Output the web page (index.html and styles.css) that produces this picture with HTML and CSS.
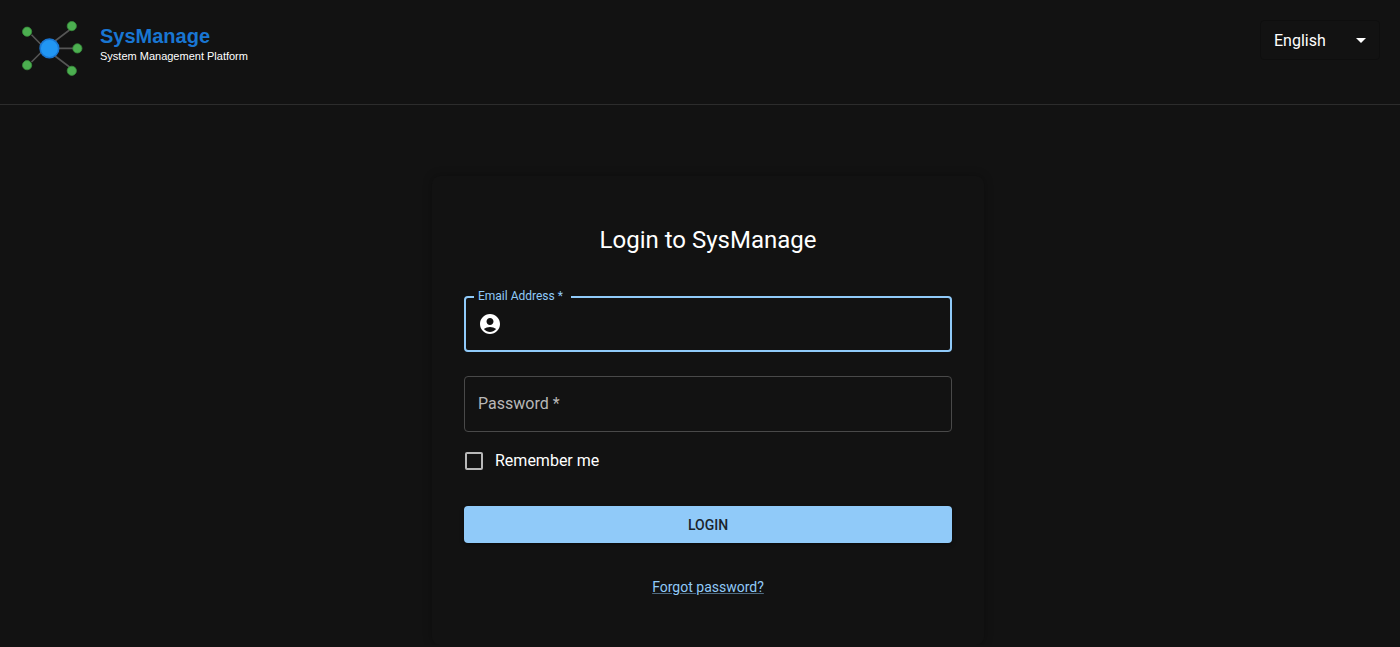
FILE: index.html
```html
<!DOCTYPE html>
<html lang="en">
<head>
  <meta charset="utf-8">
  <meta name="viewport" content="width=device-width, initial-scale=1">
  <title>SysManage</title>
  <link rel="stylesheet" href="styles.css">
</head>
<body>
  <header class="header">
    <div class="brand">
      <svg class="brand-logo" viewBox="0 0 64 64" aria-hidden="true">
        <path d="M11.500 18.800 21.500 29M35 25 49.500 14M39 32.400H53M35 40 49.500 51M11.500 46 21.500 36" fill="none" stroke="#555" stroke-width="1.6"/>
        <circle cx="29.400" cy="32.400" r="9.300" fill="#2196f3" stroke="#1976d2" stroke-width="1.6"/>
        <g fill="#4caf50" stroke="#388e3c" stroke-width=".8">
          <circle cx="7.100" cy="15.700" r="4.600"/>
          <circle cx="51.800" cy="10.100" r="4.600"/>
          <circle cx="57.400" cy="32.400" r="4.600"/>
          <circle cx="51.800" cy="54.800" r="4.600"/>
          <circle cx="7.100" cy="49.200" r="4.600"/>
        </g>
      </svg>
      <div class="brand-text">
        <span class="brand-name">SysManage</span>
        <span class="brand-tagline">System Management Platform</span>
      </div>
    </div>
    <div class="language">
      <select class="language-select" aria-label="Language">
        <option>English</option>
      </select>
      <svg class="language-arrow" viewBox="0 0 24 24" aria-hidden="true"><path d="m7 10 5 5 5-5z"/></svg>
    </div>
  </header>
  <main class="main">
    <form class="card">
      <h1 class="title">Login to SysManage</h1>
      <div class="field field-active">
        <label class="field-label" for="email">Email Address *</label>
        <svg class="field-icon" viewBox="0 0 24 24" aria-hidden="true"><path d="M12 2C6.480 2 2 6.480 2 12s4.480 10 10 10 10-4.480 10-10S17.520 2 12 2m0 4c1.930 0 3.500 1.570 3.500 3.500S13.930 13 12 13s-3.500-1.570-3.500-3.500S10.070 6 12 6m0 14c-2.030 0-4.430-.82-6.140-2.880C7.550 15.800 9.680 15 12 15s4.450.8 6.140 2.120C16.430 19.180 14.030 20 12 20"/></svg>
        <input class="field-input" id="email" type="email" required>
      </div>
      <div class="field">
        <label class="field-label" for="password">Password *</label>
        <input class="field-input" id="password" type="password" required>
      </div>
      <label class="remember">
        <input class="remember-box" type="checkbox">
        <span>Remember me</span>
      </label>
      <button class="submit" type="submit">LOGIN</button>
      <a class="forgot" href="#">Forgot password?</a>
    </form>
  </main>
</body>
</html>
```
FILE: styles.css
```css
* {
  box-sizing: border-box;
}

body {
  margin: 0;
  background: #121212;
  color: #fff;
  font-family: Roboto, "Liberation Sans", sans-serif;
  font-size: 16px;
  line-height: 24px;
}

.header {
  display: flex;
  justify-content: space-between;
  align-items: flex-start;
  padding: 16px 20px 24px;
  border-bottom: 1px solid #2c2c2c;
}

.brand {
  display: flex;
  gap: 16px;
}

.brand-logo {
  width: 64px;
  height: 64px;
}

.brand-text {
  display: flex;
  flex-direction: column;
  padding-top: 8px;
  font-family: "Liberation Sans", Arial, sans-serif;
}

.brand-name {
  color: #1976d2;
  font-size: 20px;
  font-weight: 700;
  line-height: 24px;
}

.brand-tagline {
  font-size: 11px;
  line-height: 16px;
}

.language {
  position: relative;
  width: 120px;
  margin-top: 4px;
}

.language-select {
  display: block;
  appearance: none;
  width: 100%;
  height: 40px;
  padding: 2px 32px 0 13px;
  border: 1px solid #0e0e0e;
  border-radius: 4px;
  background: transparent;
  color: #fff;
  font: inherit;
}

.language-arrow {
  position: absolute;
  top: 8px;
  right: 7px;
  width: 24px;
  height: 24px;
  fill: #fff;
  pointer-events: none;
}

.main {
  display: flex;
  justify-content: center;
  padding: 71px 0 0 16px;
}

.card {
  display: flex;
  flex-direction: column;
  width: 100%;
  max-width: 552px;
  padding: 48px 32px 46px;
  border-radius: 8px;
  background: #121212;
  box-shadow: 0 0 10px rgba(0, 0, 0, 0.3);
}

.title {
  margin: 0 0 40px;
  font-size: 24px;
  font-weight: 400;
  line-height: 32px;
  text-align: center;
}

.field {
  position: relative;
  display: flex;
  align-items: center;
  gap: 8px;
  height: 56px;
  margin-bottom: 24px;
  padding: 0 13px;
  border: 1px solid #494949;
  border-radius: 4px;
}

.field + .remember {
  margin-top: -7px;
}

.field-active {
  padding: 0 12px;
  border: 2px solid #90caf9;
}

.field-label {
  position: absolute;
  top: 15px;
  left: 13px;
  color: #b8b8b8;
}

.field-active .field-label {
  top: -10px;
  left: 8px;
  padding: 0 8px 0 4px;
  background: #121212;
  color: #90caf9;
  font-size: 12px;
  line-height: 16px;
}

.field-icon {
  flex: none;
  width: 24px;
  height: 24px;
  fill: #fff;
}

.field-input {
  flex: 1;
  min-width: 0;
  height: 100%;
  padding: 0;
  border: 0;
  outline: 0;
  background: transparent;
  color: #fff;
  font: inherit;
}

.remember {
  display: flex;
  align-items: center;
  align-self: flex-start;
  gap: 12px;
  margin-bottom: 33px;
  padding-left: 1px;
}

.remember-box {
  appearance: none;
  width: 18px;
  height: 18px;
  margin: 0;
  border: 2px solid #b8b8b8;
  border-radius: 2px;
}

.submit {
  height: 37px;
  border: 0;
  border-radius: 4px;
  background: #90caf9;
  box-shadow: 0 2px 4px rgba(0, 0, 0, 0.4);
  color: #1b242c;
  font: inherit;
  font-size: 14px;
  font-weight: 500;
}

.forgot {
  align-self: center;
  margin-top: 32px;
  color: #90caf9;
  font-size: 14px;
  text-decoration-color: #4f6a80;
}
```
